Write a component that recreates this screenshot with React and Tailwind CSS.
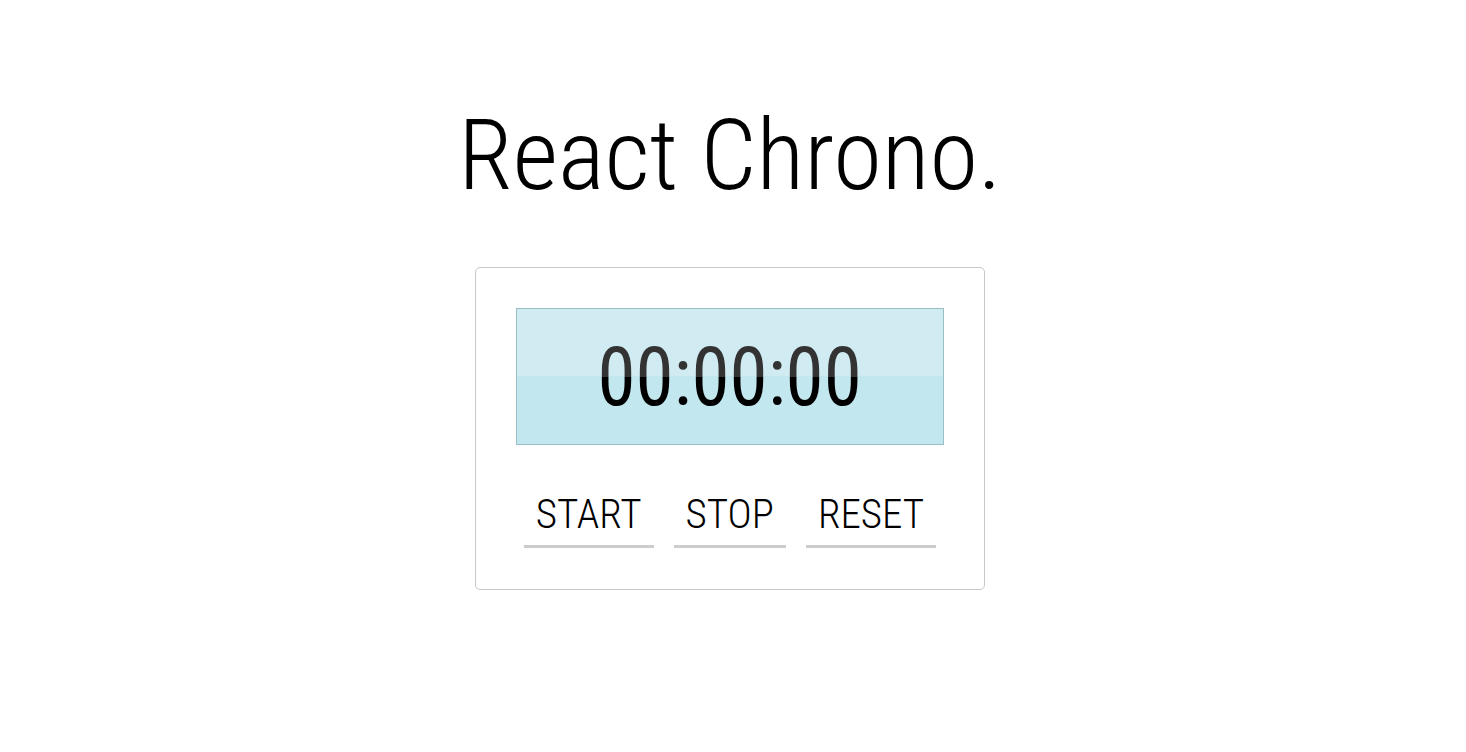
export default function App() {
  const font = { fontFamily: '"Roboto Condensed", Roboto, "Liberation Sans", sans-serif' }
  return (
    <div className="flex min-h-screen flex-col items-center bg-white pr-[6px] text-black" style={font}>
      <h1 className="mt-[100px] text-[99px] font-light leading-[110px] [font-stretch:condensed]">
        React Chrono.
      </h1>
      <div className="mt-[57px] flex w-[510px] flex-col items-center rounded-[5px] border border-[#c8c8c8] px-[40px] pt-[40px] pb-[41px]">
        <div className="flex h-[137px] w-[428px] items-center justify-center border border-[#9bbfc6] bg-[linear-gradient(#d0ecf2_0,#d0ecf2_50%,#c2e7ef_50%,#c2e7ef_100%)]">
          <span className="scale-x-[0.94] bg-[linear-gradient(#333333_0,#333333_50%,#000000_50%,#000000_100%)] bg-clip-text text-[82px] leading-[96px] font-normal text-transparent [font-stretch:condensed]">
            00:00:00
          </span>
        </div>
        <div className="mt-[45px] flex gap-[20px]">
          {['START', 'STOP', 'RESET'].map((label) => (
            <button
              key={label}
              className="border-b-[3px] border-[#cccccc] px-[12px] pb-[7px] text-[41px] leading-[48px] font-light [font-stretch:condensed]"
            >
              {label}
            </button>
          ))}
        </div>
      </div>
    </div>
  )
}
